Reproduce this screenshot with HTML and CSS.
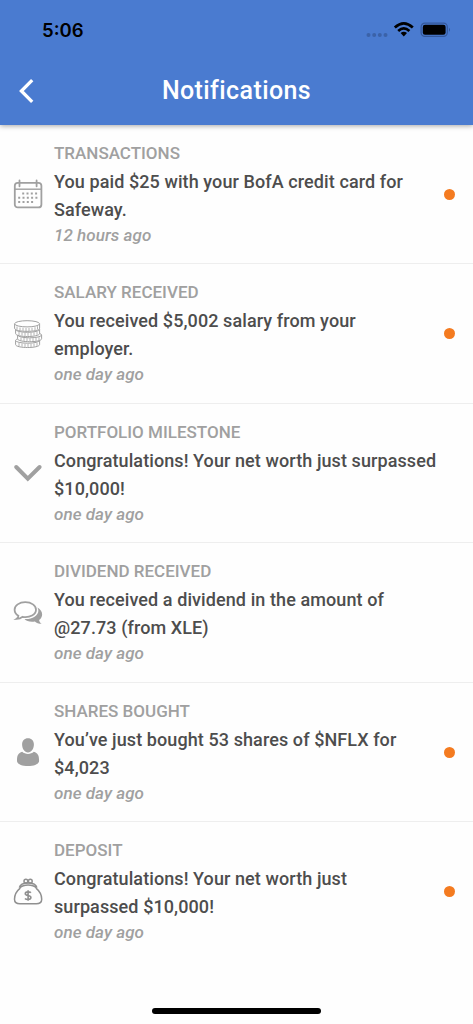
FILE: index.html
```html
<!DOCTYPE html>
<html lang="en">
<head>
<meta charset="utf-8">
<title>Notifications</title>
<link rel="stylesheet" href="styles.css">
</head>
<body>
<div class="screen">
  <header class="header">
    <div class="status">
      <span class="clock">5:06</span>
      <svg class="indicators" width="86" height="20" viewBox="0 0 86 20">
        <g fill="#3b62a8"><circle cx="3.5" cy="15" r="2"/><circle cx="9.2" cy="15" r="2"/><circle cx="14.8" cy="15" r="2"/><circle cx="20.5" cy="15" r="2"/></g>
        <g fill="none" stroke="#000" stroke-width="2.7"><path d="M29.8 7.4Q38.8-.8 47.8 7.4"/><path d="M33.2 11Q38.8 5.8 44.4 11"/></g>
        <path d="M35.6 13Q38.8 10.5 42 13L38.8 16.6Z"/>
        <rect x="56.1" y="3.1" width="26.2" height="13.3" rx="3.8" fill="none" stroke="#34589a" stroke-width="1.2"/>
        <rect x="57.8" y="4.8" width="22.8" height="10" rx="2.2"/>
        <path d="M84 7.8Q86 9.8 84 11.8Z" fill="#34589a"/>
      </svg>
    </div>
    <div class="navbar">
      <svg class="back" width="18" height="28" viewBox="0 0 18 28"><path d="M14.2 3.2 3.4 14l10.8 10.8" fill="none" stroke="#fff" stroke-width="3.3"/></svg>
      <h1 class="title">Notifications</h1>
    </div>
  </header>
  <main class="list">
    <article class="item">
      <svg class="icon" viewBox="0 0 30 30" fill="none" stroke="#a0a0a0">
        <rect x="1.8" y="3.8" width="26.6" height="24.6" rx="3" stroke-width="1.8"/>
        <path d="M2 10.2h26" stroke-width="1.4"/>
        <path d="M6.5 1.500v5.800M23.600 1.500v5.800" stroke-width="1.8" stroke-linecap="round"/>
        <path d="M9.200 14.400h16M5.200 18.700h20M5.200 23h16" stroke-width="2" stroke-dasharray="2 2.3"/>
      </svg>
      <div class="content"><div class="label">TRANSACTIONS</div><p class="message">You paid $25 with your BofA credit card for<br>Safeway.</p><time class="time">12 hours ago</time></div>
      <span class="dot"></span>
    </article>
    <article class="item">
      <svg class="icon" viewBox="0 0 30 30" fill="#fff" stroke="#a0a0a0" stroke-width="1">
        <path d="M2.6 21.5v4c0 4 24 4 24 0v-4"/><ellipse cx="14.6" cy="21.4" rx="12" ry="2.8"/>
        <path d="M6 24v3.5m3-2.9v3m3-2.7v3m3-3v3m3-3v3m3-3.4v3m3-3.6v3" stroke-width=".8"/>
        <path d="M4.6 16v3.7c0 4 24 4 24 0V16"/><ellipse cx="16.6" cy="16" rx="12" ry="2.8"/>
        <path d="M8 18.5v3m3-2.6v3m3-2.7v3m3-3v3m3-3v3m3-3.4v3m3-3.6v3" stroke-width=".8"/>
        <path d="M2.6 10.5v4c0 4 24 4 24 0v-4"/><ellipse cx="14.6" cy="10.5" rx="12" ry="2.8"/>
        <path d="M6 13v3m3-2.5v3m3-2.6v3m3-3v3m3-3v3m3-3.5v3m3-3.6v3" stroke-width=".8"/>
        <path d="M1.6 5v4.2c0 4.2 25 4.2 25 0V5"/><ellipse cx="14.1" cy="4.8" rx="12.5" ry="3.1"/>
        <path d="M4 7.5v3m3-2v3m3-2.7v3m3-2.8v3m3-3v3m3-3.2v3m3-3.6v3m2.5-4v3" stroke-width=".8"/>
      </svg>
      <div class="content"><div class="label">SALARY RECEIVED</div><p class="message">You received $5,002 salary from your<br>employer.</p><time class="time">one day ago</time></div>
      <span class="dot"></span>
    </article>
    <article class="item">
      <svg class="icon" viewBox="0 0 30 30"><path d="m3.2 9 11.6 11.700L26.600 9" fill="none" stroke="#a0a0a0" stroke-width="4" stroke-linecap="round"/></svg>
      <div class="content"><div class="label">PORTFOLIO MILESTONE</div><p class="message">Congratulations! Your net worth just surpassed<br>$10,000!</p><time class="time">one day ago</time></div>
    </article>
    <article class="item">
      <svg class="icon" viewBox="0 0 30 30">
        <path d="M24.4 9.4c6 3.3 6 9.7 1.7 12.5.2 1.8 1.3 3.1 2.6 3.800-3 0-5.400-.8-6.800-2.300-4.100.8-8.400-.1-10.400-2.500 8.400.7 16.800-5.100 12.900-11.500Z" fill="#a0a0a0"/>
        <path d="M12.300 4.200c-6.100 0-10.700 3.300-10.700 7.500 0 2.400 1.400 4.600 3.800 6 0 1.500-1 2.600-1.900 3.200 2.500-.1 4.500-.8 5.900-2.100 7.700 1.200 13.600-2.300 13.600-7.100 0-4.200-4.600-7.500-10.700-7.500Z" fill="#fff" stroke="#a0a0a0" stroke-width="1.8"/>
      </svg>
      <div class="content"><div class="label">DIVIDEND RECEIVED</div><p class="message">You received a dividend in the amount of<br>@27.73 (from XLE)</p><time class="time">one day ago</time></div>
    </article>
    <article class="item">
      <svg class="icon" viewBox="0 0 30 30" fill="#a0a0a0">
        <path d="M15 1.200c3.600 0 5.900 2.400 5.900 6.200 0 4.200-2.500 8-5.900 8s-5.900-3.800-5.900-8c0-3.800 2.300-6.200 5.900-6.200Z"/>
        <path d="M9.200 14.800c2.900 2.800 8.700 2.800 11.600 0 4 1.500 5.300 3.200 5.300 9 0 3-4.400 5.300-11.100 5.300S4 26.800 4 23.800c0-5.800 1.200-7.500 5.200-9Z"/>
      </svg>
      <div class="content"><div class="label">SHARES BOUGHT</div><p class="message">You’ve just bought 53 shares of $NFLX for<br>$4,023</p><time class="time">one day ago</time></div>
      <span class="dot"></span>
    </article>
    <article class="item">
      <svg class="icon" viewBox="0 0 30 30" fill="none" stroke="#909090" stroke-width="1.5">
        <path d="M7.200 11.200C2.800 14.800 1.500 18.800 1.500 22.300c0 2.800 1.500 4.500 5.500 4.500h16.200c4 0 5.500-1.700 5.500-4.500 0-3.500-1.300-7.500-5.700-11.100"/>
        <path d="M6.300 10.700C7.800 4.400 22.400 4.400 23.900 10.700M6.800 11.100c3.800-4 12.800-4 16.600 0"/>
        <circle cx="12.900" cy="4.200" r="1.900"/><circle cx="17.300" cy="4.200" r="1.900"/>
        <path d="M17.900 15.800c-1-1.200-5.600-1.500-5.600.9 0 2.600 5.600 1.100 5.600 3.900 0 2.500-4.800 2.200-5.900.8M15.100 13.300v10.400" stroke-width="1.6"/>
      </svg>
      <div class="content"><div class="label">DEPOSIT</div><p class="message">Congratulations! Your net worth just<br>surpassed $10,000!</p><time class="time">one day ago</time></div>
      <span class="dot"></span>
    </article>
  </main>
  <footer class="footer"><div class="home"></div></footer>
</div>
</body>
</html>
```

FILE: styles.css
```css
* { box-sizing: border-box; }
body { margin: 0; background: #fefefe; font-family: Roboto, sans-serif; }
.screen { width: 473px; height: 1024px; display: flex; flex-direction: column; overflow: hidden; }
.header { height: 124.5px; flex: none; background: #4a7bd0; box-shadow: 0 1px 5px rgba(0,0,0,.35); }
.status { height: 57px; padding: 20px 22px 0 42px; display: flex; justify-content: space-between; }
.clock { font: 600 18.5px/21px Inter, sans-serif; color: #000; }
.indicators { display: block; }
.navbar { height: 68px; padding: 0 18px; display: grid; grid-template-columns: 18px 1fr 18px; align-items: center; }
.back { display: block; }
.title { margin: 0; text-align: center; color: #fff; font-size: 25px; line-height: 32px; font-weight: 500; letter-spacing: .4px; }
.list { flex: none; }
.item { height: 139.55px; padding: 14px 18px 0 13px; display: grid; grid-template-columns: 30px 1fr 11px; column-gap: 11px; border-bottom: 1px solid #eee; }
.item:last-child { border-bottom: 0; }
.icon { width: 30px; height: 30px; margin-top: 40.5px; display: block; }
.content { white-space: nowrap; font-weight: 500; font-size: 18px; line-height: 28px; }
.label { color: #a0a0a0; font-size: 17px; }
.message { margin: 1.2px 0 0; color: #4d4d4d; letter-spacing: .09px; }
.time { display: block; color: #a0a0a0; font-size: 17px; font-style: italic; line-height: 23.5px; letter-spacing: .05px; }
.dot { width: 11px; height: 11px; margin-top: 50px; border-radius: 50%; background: #f47b20; }
.footer { flex: 1; display: flex; justify-content: center; align-items: flex-end; padding-bottom: 10px; }
.home { width: 169px; height: 6px; border-radius: 3px; background: #000; }
```
